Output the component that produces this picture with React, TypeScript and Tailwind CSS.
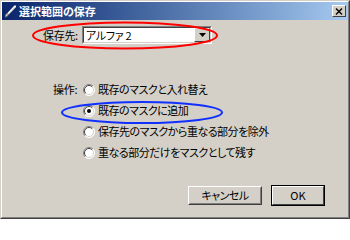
import React from 'react'

function Radio({ checked }: { checked?: boolean }) {
  return (
    <svg width="12" height="12" viewBox="0 0 12 12" className="shrink-0">
      <circle cx="6" cy="6" r="5.5" fill="#ffffff" />
      <path d="M2.1 9.9 A5.5 5.5 0 0 1 9.9 2.1" stroke="#808080" fill="none" />
      <path d="M9.9 2.1 A5.5 5.5 0 0 1 2.1 9.9" stroke="#ffffff" fill="none" />
      <path d="M2.8 9.2 A4.5 4.5 0 0 1 9.2 2.8" stroke="#404040" fill="none" />
      <path d="M9.2 2.8 A4.5 4.5 0 0 1 2.8 9.2" stroke="#d4d0c8" fill="none" />
      {checked && <circle cx="6" cy="6" r="2" fill="#000000" />}
    </svg>
  )
}

const options = [
  '既存のマスクと入れ替え',
  '既存のマスクに追加',
  '保存先のマスクから重なる部分を除外',
  '重なる部分だけをマスクとして残す',
]

export default function App() {
  return (
    <div className="relative w-[350px] h-[219px] overflow-hidden border border-[#d4d0c8] border-r-[#404040] border-b-[#404040] font-['Noto_Sans_CJK_JP',sans-serif] text-[11px] leading-none text-black [font-feature-settings:'palt']">
      <div className="flex flex-col h-full border border-white border-r-[#808080] border-b-[#808080] bg-[#d4d0c8]">
        {/* title bar */}
        <div className="flex items-center h-[18px] pl-[2px] pr-[2px] bg-gradient-to-r from-[#0a246a] to-[#a6caf0]">
          <svg width="12" height="13" viewBox="0 0 12 13" className="shrink-0">
            <path d="M4 9 L11 1.5" stroke="#ffffff" strokeWidth="2.2" strokeLinecap="round" />
            <path d="M4.6 9.4 L11 2.4" stroke="#9a9a9a" strokeWidth="0.9" />
            <path d="M1 12.5 L1.5 9.5 Q3 7.8 4.6 9.3 Q4.2 11.5 1 12.5 Z" fill="#d0d0d0" stroke="#404040" strokeWidth="0.6" />
          </svg>
          <span className="ml-[3px] text-white font-bold text-[11px]">選択範囲の保存</span>
          <div className="ml-auto flex items-center justify-center w-[14px] h-[12px] bg-[#d4d0c8] border border-white border-r-[#404040] border-b-[#404040]">
            <svg width="8" height="7" viewBox="0 0 8 7">
              <path d="M1 0.5 L7 6.5 M7 0.5 L1 6.5" stroke="#000000" strokeWidth="1.4" />
            </svg>
          </div>
        </div>

        {/* destination */}
        <div className="flex items-center mt-[6px] pl-[41px]">
          <span className="w-[39px] tracking-[-0.3px]">保存先:</span>
          <div className="w-[130px] h-[18px] border border-[#808080] border-r-white border-b-white">
            <div className="flex h-full border border-[#404040] border-r-[#d4d0c8] border-b-[#d4d0c8] bg-white">
              <span className="flex-1 flex items-center pl-[2px] tracking-[-0.3px]">アルファ 2</span>
              <div className="flex items-center justify-center w-[16px] h-full bg-[#d4d0c8] border border-white border-r-[#404040] border-b-[#404040]">
                <svg width="7" height="4" viewBox="0 0 7 4">
                  <path d="M0 0 L7 0 L3.5 4 Z" fill="#000000" />
                </svg>
              </div>
            </div>
          </div>
        </div>

        {/* operation */}
        <div className="flex mt-[35px] pl-[51px]">
          <span className="w-[30px] h-[21px] flex items-center tracking-[-0.3px]">操作:</span>
          <div className="flex flex-col">
            {options.map((label, i) => (
              <div key={label} className="flex items-center gap-[3px] h-[21px]">
                <Radio checked={i === 1} />
                <span className="tracking-[-0.5px]">{label}</span>
              </div>
            ))}
          </div>
        </div>

        {/* buttons */}
        <div className="flex items-center justify-end gap-[9px] mt-[22px] pr-[23px] h-[21px]">
          <button className="w-[74px] h-[19px] bg-[#d4d0c8] border border-white border-r-[#404040] border-b-[#404040] text-[11px]">
            <span className="flex items-center justify-center h-full border border-transparent border-r-[#808080] border-b-[#808080] tracking-[-0.5px]">キャンセル</span>
          </button>
          <button className="w-[54px] h-[21px] border border-black bg-[#d4d0c8] text-[11px]">
            <span className="flex items-center justify-center h-full border border-white border-r-[#404040] border-b-[#404040]">OK</span>
          </button>
        </div>
      </div>

      {/* annotations */}
      <svg width="350" height="219" viewBox="0 0 350 219" className="absolute left-[-1px] top-[-1px] pointer-events-none">
        <ellipse cx="125" cy="35.5" rx="92" ry="13" fill="none" stroke="#ff0000" strokeWidth="2" />
        <ellipse cx="142" cy="112.5" rx="80" ry="10.5" fill="none" stroke="#1030ff" strokeWidth="2" />
      </svg>
    </div>
  )
}
